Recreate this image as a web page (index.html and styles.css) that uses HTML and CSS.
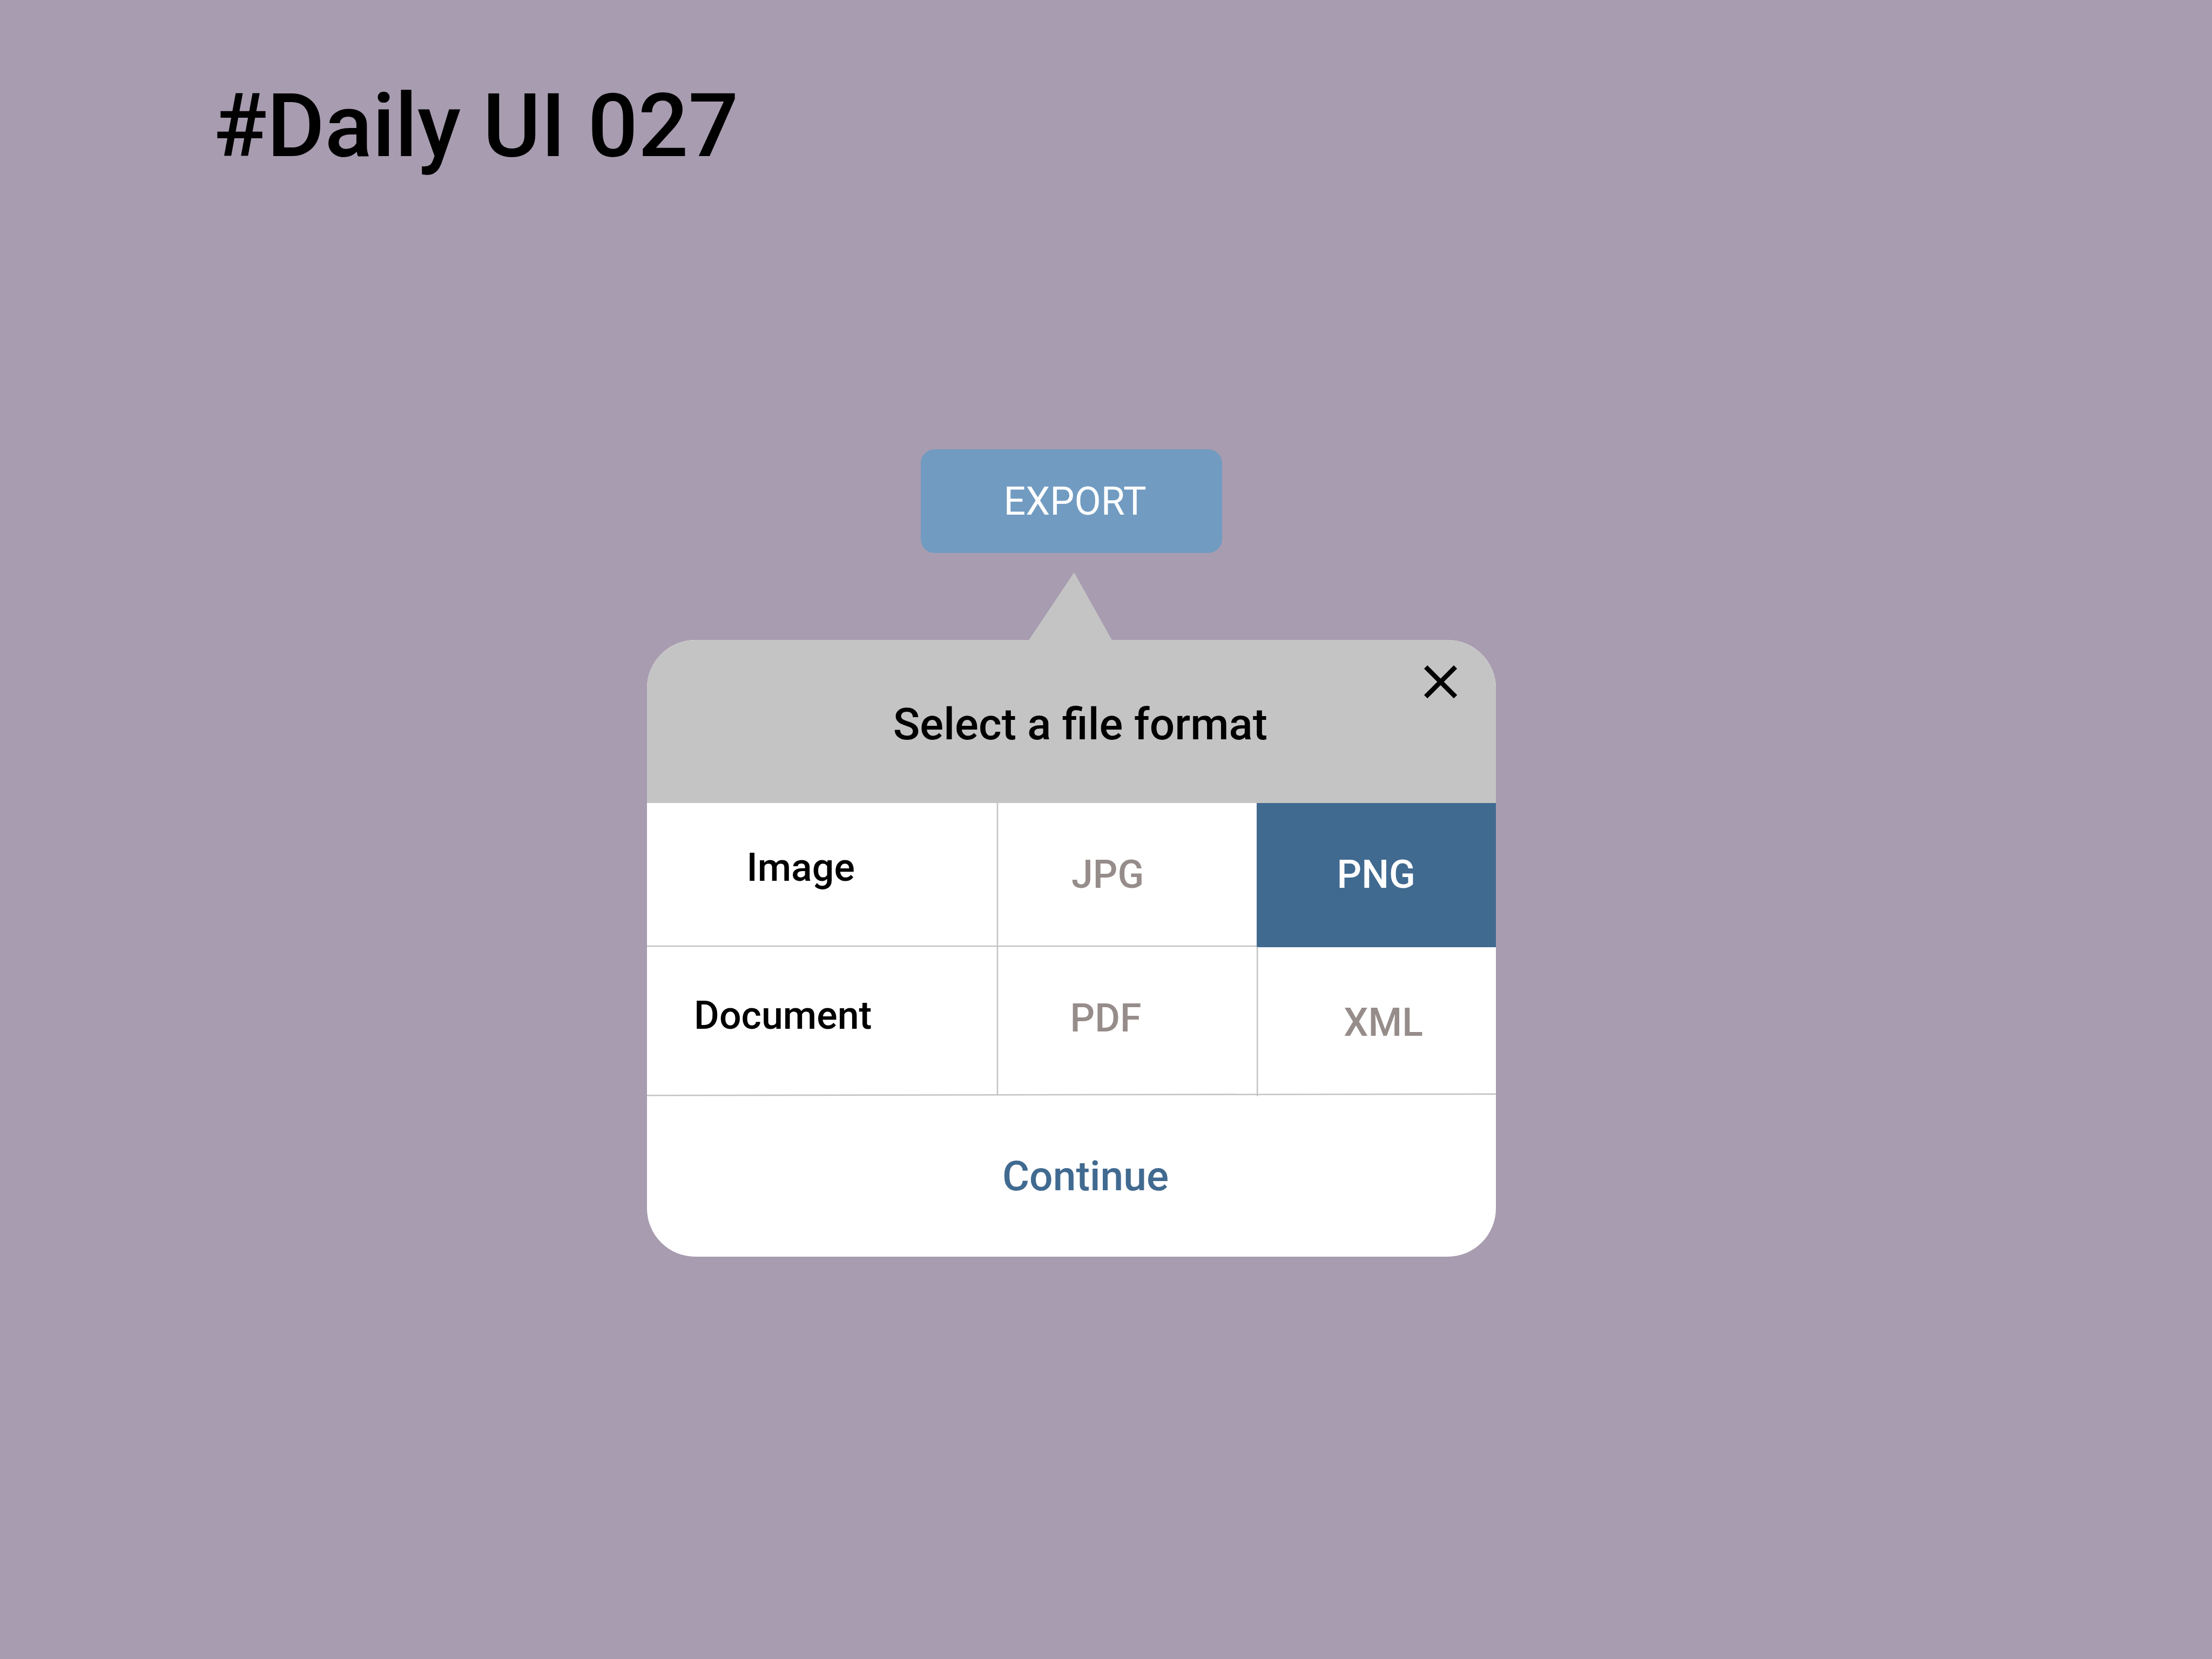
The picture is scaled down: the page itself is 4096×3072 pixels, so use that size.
FILE: index.html
```
<!DOCTYPE html>
<html lang="en">
<head>
<meta charset="utf-8">
<title>Daily UI 027</title>
<link rel="stylesheet" href="styles.css">
</head>
<body>
<main class="page">
  <h1 class="title">#Daily UI 027</h1>
  <button class="export" type="button">EXPORT</button>
  <svg class="pointer" viewBox="0 0 60 49" aria-hidden="true"><path d="M32.8 0L60.2 49H0z"/></svg>
  <section class="card">
    <header class="card-header">
      <h2 class="card-title">Select a file format</h2>
      <button class="close" type="button" aria-label="Close">
        <svg class="close-icon" viewBox="5 5 14 14"><path d="M19 6.41L17.59 5 12 10.59 6.41 5 5 6.41 10.59 12 5 17.59 6.41 19 12 13.41 17.59 19 19 17.59 13.41 12z"/></svg>
      </button>
    </header>
    <div class="formats">
      <div class="cell label image">Image</div>
      <div class="cell jpg">JPG</div>
      <div class="cell png">PNG</div>
      <div class="cell label document">Document</div>
      <div class="cell pdf">PDF</div>
      <div class="cell xml">XML</div>
      <svg class="rules" viewBox="0 0 614 214" aria-hidden="true">
        <path d="M0 103.5H441M253.5 0V211M441.5 104V212M0 211.5L614 210.5"/>
      </svg>
    </div>
    <button class="continue" type="button">Continue</button>
  </section>
</main>
</body>
</html>
```
FILE: styles.css
```
:root {
  --u: 2.56px;
  --surface: #c4c4c4;
  --accent: #416a90;
  --muted: #968d8b;
}

* {
  box-sizing: border-box;
  margin: 0;
}

body {
  background: #a89cb0;
  color: #000;
  font-family: Roboto, "Liberation Sans", sans-serif;
  font-weight: 500;
}

button {
  display: block;
  padding: 0;
  border: 0;
  background: none;
  color: inherit;
  font: inherit;
  text-align: left;
}

svg {
  display: block;
}

.page {
  display: flex;
  flex-direction: column;
  align-items: flex-start;
  width: calc(1600 * var(--u));
  height: calc(1200 * var(--u));
  padding-top: calc(53.6 * var(--u));
  overflow: hidden;
}

.title {
  height: calc(75 * var(--u));
  margin-left: calc(154.5 * var(--u));
  font-size: calc(64 * var(--u));
  font-weight: 500;
  line-height: calc(75 * var(--u));
  white-space: nowrap;
}

.export {
  width: calc(218 * var(--u));
  height: calc(75 * var(--u));
  margin: calc(196.4 * var(--u)) 0 0 calc(666 * var(--u));
  padding: calc(0.8 * var(--u)) 0 0 calc(60 * var(--u));
  border-radius: calc(10 * var(--u));
  background: #719bc1;
  color: #fff;
  font-size: calc(28 * var(--u));
  font-weight: 400;
  line-height: calc(74.2 * var(--u));
}

.pointer {
  width: calc(60 * var(--u));
  height: calc(49 * var(--u));
  margin: calc(14 * var(--u)) 0 0 calc(744.2 * var(--u));
  fill: var(--surface);
  overflow: visible;
}

.card {
  width: calc(614 * var(--u));
  height: calc(446 * var(--u));
  margin-left: calc(468 * var(--u));
  border-radius: calc(35 * var(--u));
  background: #fff;
  overflow: hidden;
}

.card-header {
  display: flex;
  justify-content: space-between;
  align-items: flex-start;
  height: calc(118 * var(--u));
  padding: 0 calc(28.1 * var(--u)) 0 calc(178 * var(--u));
  background: var(--surface);
}

.card-title {
  margin-top: calc(42 * var(--u));
  font-size: calc(32 * var(--u));
  font-weight: 500;
  line-height: calc(38 * var(--u));
  white-space: nowrap;
}

.close {
  margin-top: calc(18.1 * var(--u));
}

.close-icon {
  width: calc(23.9 * var(--u));
  height: calc(23.9 * var(--u));
}

.formats {
  position: relative;
  display: grid;
  grid-template-columns: calc(253 * var(--u)) calc(188 * var(--u)) calc(173 * var(--u));
  grid-template-rows: calc(104 * var(--u)) calc(107 * var(--u));
}

.cell {
  color: var(--muted);
  font-size: calc(28 * var(--u));
  line-height: calc(33 * var(--u));
}

.label {
  color: #000;
}

.image {
  padding: calc(30.4 * var(--u)) 0 0 calc(72 * var(--u));
}

.jpg {
  padding: calc(35.4 * var(--u)) 0 0 calc(54 * var(--u));
}

.png {
  padding: calc(35.4 * var(--u)) 0 0 calc(58 * var(--u));
  background: var(--accent);
  color: #fff;
}

.document {
  padding: calc(33.4 * var(--u)) 0 0 calc(34 * var(--u));
}

.pdf {
  padding: calc(35.4 * var(--u)) 0 0 calc(53 * var(--u));
}

.xml {
  padding: calc(38.4 * var(--u)) 0 0 calc(63 * var(--u));
}

.rules {
  position: absolute;
  top: 0;
  left: 0;
  width: calc(614 * var(--u));
  height: calc(214 * var(--u));
  fill: none;
  stroke: var(--surface);
  stroke-width: 1;
}

.continue {
  width: 100%;
  height: calc(117 * var(--u));
  padding: calc(1 * var(--u)) 0 0 calc(257 * var(--u));
  color: var(--accent);
  font-size: calc(30 * var(--u));
  line-height: calc(116 * var(--u));
}
```
